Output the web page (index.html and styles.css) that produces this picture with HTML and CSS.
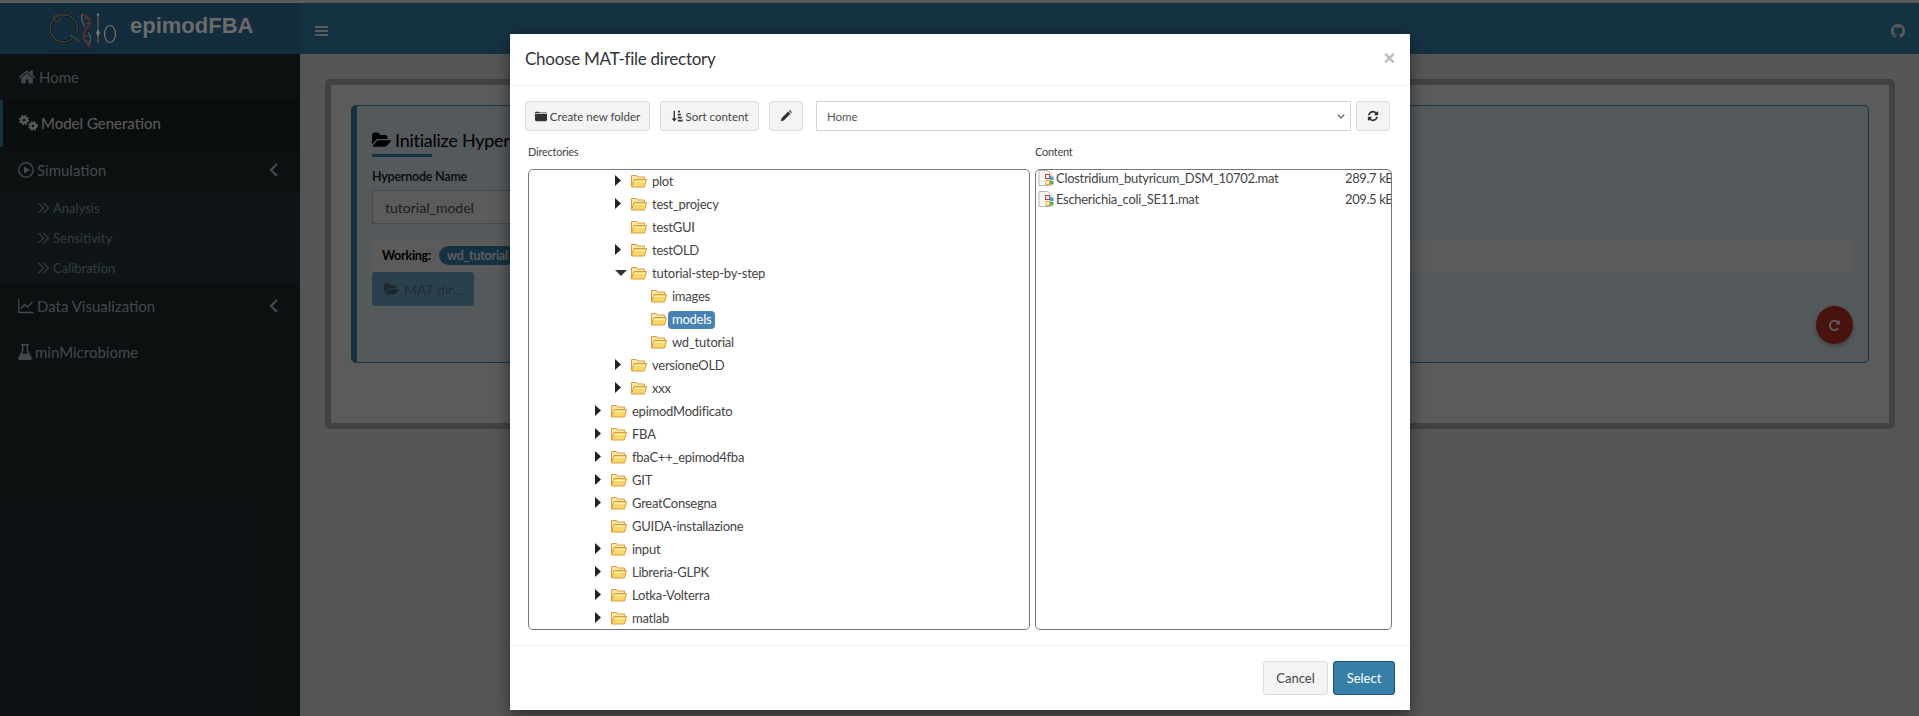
FILE: index.html
```html
<!DOCTYPE html>
<html lang="en">

<head>
    <meta charset="UTF-8">
    <meta name="viewport" content="width=device-width, initial-scale=1.0">
    <title>epimodFBA</title>
    <link rel="stylesheet" href="styles.css">
</head>

<body>
    <svg class="defs" aria-hidden="true">
        <symbol id="i-home" viewBox="0 0 1792 1792"><path d="M1472 992v480q0 26-19 45t-45 19h-384v-384h-256v384h-384q-26 0-45-19t-19-45v-480q0-1 .5-3t.5-3l575-474 575 474q1 2 1 6zm223-69l-62 74q-8 9-21 11h-3q-13 0-21-7l-692-577-692 577q-12 8-24 7-13-2-21-11l-62-74q-8-10-7-23.500t11-21.500l719-599q32-26 76-26t76 26l244 204v-195q0-14 9-23t23-9h192q14 0 23 9t9 23v408l219 182q10 8 11 21.500t-7 23.500z"/></symbol>
        <symbol id="i-open" viewBox="0 0 1920 1792"><path d="M1845 971q0 35-35 75l-336 396q-43 51-120.500 86.500t-143.500 35.500h-1088q-34 0-60.500-13t-26.500-43q0-35 35-75l336-396q43-51 120.500-86.500t143.500-35.500h1088q34 0 60.500 13t26.500 43zm-343-345v160h-832q-94 0-197 47.500t-164 119.500l-337 396-5 6q0-4-.5-12.500t-.5-12.500v-960q0-92 66-158t158-66h320q92 0 158 66t66 158v32h544q92 0 158 66t66 158z"/></symbol>
        <symbol id="i-folder" viewBox="0 0 14 12"><path d="M0 3.500h14v7q0 1.500-1.500 1.500h-11Q0 12 0 10.500zM0 2.500V2q0-1 1-1h3.500l1 1h7.500q1 0 1 .5z"/></symbol>
        <symbol id="i-refresh" viewBox="0 0 1792 1792"><path d="M1639 1056q0 5-1 7-64 268-268 434.500t-478 166.500q-146 0-282.500-55t-243.500-157l-129 129q-19 19-45 19t-45-19-19-45v-448q0-26 19-45t45-19h448q26 0 45 19t19 45-19 45l-137 137q71 66 161 102t187 36q134 0 250-65t186-179q11-17 53-117 8-23 30-23h192q13 0 22.500 9.500t9.500 22.500zm25-800v448q0 26-19 45t-45 19h-448q-26 0-45-19t-19-45 19-45l138-138q-148-137-349-137-134 0-250 65t-186 179q-11 17-53 117-8 23-30 23h-199q-13 0-22.500-9.500t-9.500-22.500v-7q65-268 270-434.500t480-166.500q146 0 284 55.500t245 156.500l130-129q19-19 45-19t45 19 19 45z"/></symbol>
        <symbol id="i-repeat" viewBox="0 0 1792 1792"><path d="M1664 256v448q0 26-19 45t-45 19h-448q-42 0-59-40-17-39 14-69l138-138q-148-137-349-137-104 0-198.500 40.500t-163.500 109.500-109.500 163.500-40.500 198.500 40.500 198.500 109.500 163.500 163.500 109.500 198.500 40.500q119 0 225-52t179-147q7-10 23-12 15 0 25 9l137 138q9 8 9.500 20.500t-7.500 22.500q-109 132-264 204.500t-327 72.500q-156 0-298-61t-245-164-164-245-61-298 61-298 164-245 245-164 298-61q147 0 284.500 55.500t244.500 156.500l130-129q29-31 70-14 39 17 39 59z"/></symbol>
        <symbol id="i-github" viewBox="0 0 16 16"><path d="M8 0C3.58 0 0 3.58 0 8c0 3.54 2.29 6.53 5.47 7.63.4.07.55-.17.55-.38 0-.19-.01-.82-.01-1.49-2.01.37-2.53-.49-2.69-.94-.09-.23-.48-.94-.82-1.13-.28-.15-.68-.52-.01-.53.63-.01 1.08.58 1.23.82.72 1.21 1.87.87 2.33.66.07-.52.28-.87.51-1.07-1.78-.2-3.64-.89-3.64-3.95 0-.87.31-1.59.82-2.15-.08-.2-.36-1.02.08-2.12 0 0 .67-.21 2.2.82.64-.18 1.32-.27 2-.27.68 0 1.36.09 2 .27 1.53-1.04 2.2-.82 2.2-.82.44 1.1.16 1.92.08 2.12.51.56.82 1.27.82 2.15 0 3.07-1.87 3.75-3.65 3.95.29.25.54.73.54 1.48 0 1.07-.01 1.93-.01 2.2 0 .21.15.46.55.38A8.013 8.013 0 0016 8c0-4.42-3.58-8-8-8z"/></symbol>
        <symbol id="i-left" viewBox="0 0 12 16"><path d="M9 2L3 8l6 6" fill="none" stroke="currentColor" stroke-width="2.400"/></symbol>
        <symbol id="i-double" viewBox="0 0 12 12"><path d="M.5 1l5 5-5 5M5.500 1l5 5-5 5" fill="none" stroke="currentColor" stroke-width="1.300"/></symbol>
        <symbol id="i-caret" viewBox="0 0 6 11" preserveAspectRatio="none"><path d="M0 0l6 5.500L0 11z"/></symbol>
        <symbol id="i-caret-down" viewBox="0 0 12 6" preserveAspectRatio="none"><path d="M0 0h12L6 6z"/></symbol>
        <symbol id="i-tree" viewBox="0 0 16 14">
            <path d="M.5 13V1.500h5l1 1.500h7v2.500" fill="#fbe9a8" stroke="#dc9a3c"/>
            <path d="M3 5.500h12.500L13.500 13H.5z" fill="#fdd868" stroke="#dc9a3c"/>
            <path d="M3 7.500h11" stroke="#fff3c4"/>
        </symbol>
        <symbol id="i-mat" viewBox="0 0 16 16">
            <path d="M1 .5h9l3 3v12H1z" fill="#f6f6f6" stroke="#b8b8b8"/>
            <rect x="7.500" y="4.500" width="4" height="4" fill="#fff" stroke="#c9402a"/>
            <rect x="8" y="10.500" width="3.500" height="4" fill="#fff" stroke="#f0a818"/>
            <rect x="12" y="6.500" width="3.500" height="3.500" fill="#3c9ee0"/>
            <rect x="12" y="11" width="3.500" height="3.500" fill="#6aaa48"/>
        </symbol>
    </svg>

    <div class="top-strip"></div>

    <header class="header">
        <div class="logo">
            <svg class="logo-mark" viewBox="0 0 70 40" fill="none">
                <path d="M24 27A13.500 13.500 0 1 1 28 22" stroke="#0e1a20" stroke-width="3"/>
                <path d="M24 27A13.500 13.500 0 1 1 28 22" stroke="#3a4034" stroke-width="1.500"/>
                <circle cx="9" cy="6" r="3.500" stroke="#3a4034" stroke-width="1"/>
                <path d="M22 23l9 6" stroke="#3a4034" stroke-width="2"/>
                <path d="M33 2c9 2 11 9 6 14s-5 12 4 19" stroke="#742626" stroke-width="1.600"/>
                <path d="M34 2c-1 6 1 10 3 13M40 20c3 4 4 8 0 13" stroke="#6c665f" stroke-width="1"/>
                <path d="M36 6h6M36 11h6M36 24h6M37 29h6" stroke="#5a4a48" stroke-width=".7"/>
                <path d="M50 3v28" stroke="#6c665f" stroke-width="1"/>
                <circle cx="50" cy="2.500" r="1.200" fill="#7a746c"/>
                <path d="M50 17l-2 4 2 4 2-4z" fill="#7a746c"/>
                <ellipse cx="62" cy="22" rx="5.500" ry="8.500" stroke="#7a746c" stroke-width="1.200"/>
                <text class="logo-tiny" x="1" y="39">QUANTITATIVE BIOLOGY LAB</text>
            </svg>
            <span class="logo-text">epimodFBA</span>
        </div>
        <nav class="navbar">
            <div class="burger"><span></span><span></span><span></span></div>
            <svg class="github"><use href="#i-github"/></svg>
        </nav>
    </header>

    <div class="wrapper">
        <aside class="sidebar">
            <a class="side-item"><svg class="side-icon icon-home"><use href="#i-home"/></svg>Home</a>
            <a class="side-item side-active">
                <svg class="side-icon icon-cogs" viewBox="0 0 20 16" stroke="currentColor">
                    <circle cx="6" cy="5" r="2.600" stroke-width="2.200"/>
                    <circle cx="6" cy="5" r="4.400" stroke-width="1.500" stroke-dasharray="2 1.450"/>
                    <circle cx="15" cy="11" r="2.400" stroke-width="2.200"/>
                    <circle cx="15" cy="11" r="4" stroke-width="1.500" stroke-dasharray="2 1.200"/>
                </svg>
                Model Generation
            </a>
            <a class="side-item">
                <svg class="side-icon icon-play" viewBox="0 0 16 16">
                    <circle cx="8" cy="8" r="7.200" fill="none" stroke="currentColor" stroke-width="1.400"/>
                    <path d="M6 4.500L12 8l-6 3.500z"/>
                </svg>
                Simulation
                <svg class="side-arrow"><use href="#i-left"/></svg>
            </a>
            <div class="side-sub">
                <a><svg class="sub-icon"><use href="#i-double"/></svg>Analysis</a>
                <a><svg class="sub-icon"><use href="#i-double"/></svg>Sensitivity</a>
                <a><svg class="sub-icon"><use href="#i-double"/></svg>Calibration</a>
            </div>
            <a class="side-item">
                <svg class="side-icon icon-line" viewBox="0 0 16 16">
                    <path d="M.7 1v13.500h15M2.500 11l4-4.500 3 2.500 5-5"/>
                </svg>
                Data Visualization
                <svg class="side-arrow"><use href="#i-left"/></svg>
            </a>
            <a class="side-item">
                <svg class="side-icon icon-flask" viewBox="0 0 14 16">
                    <path d="M3 0h8v1.500h-1v4.500l3.700 7.500q.6 2-1.200 2.500h-11q-1.800-.5-1.200-2.500L4 6V1.500H3zM5.500 1.500v5L4 9.500h6L8.500 6.500v-5z" fill-rule="evenodd"/>
                </svg>
                minMicrobiome
            </a>
        </aside>

        <main class="content">
            <section class="box">
                <div class="card">
                    <h2 class="card-title"><svg class="title-icon"><use href="#i-open"/></svg>Initialize Hypernode</h2>
                    <div class="title-rule"></div>
                    <label class="field-label">Hypernode Name</label>
                    <input class="field-input" type="text" value="tutorial_model">
                    <div class="working"><b>Working:</b><span class="pill">wd_tutorial</span></div>
                    <button class="mat-btn"><svg class="mat-icon"><use href="#i-open"/></svg>MAT dir…</button>
                    <div class="fab-row">
                        <button class="fab"><svg class="fab-icon"><use href="#i-repeat"/></svg></button>
                    </div>
                </div>
            </section>
        </main>
    </div>

    <div class="backdrop"></div>

    <div class="modal">
        <div class="modal-header">
            <h4>Choose MAT-file directory</h4>
            <span class="close">×</span>
        </div>
        <div class="modal-body">
            <div class="toolbar">
                <button class="btn btn-new"><svg class="btn-icon"><use href="#i-folder"/></svg>Create new folder</button>
                <button class="btn btn-sort">
                    <svg class="btn-icon" viewBox="0 0 14 14">
                        <path d="M3 1h1.600v9H7L3.800 13.500.6 10H3zM8 1h2.500v2H8zM8 4.500h3.500v2H8zM8 8h4.500v2H8zM8 11.500h5.500v2H8z"/>
                    </svg>
                    Sort content
                </button>
                <button class="btn btn-edit">
                    <svg class="btn-icon" viewBox="0 0 14 14"><path d="M1 13l.8-3.500L9.500 1.800l2.700 2.700-7.700 7.700zM10.300 1l.7-.5q.5-.3 1 .1l1.400 1.400q.4.5.1 1l-.5.7z"/></svg>
                </button>
                <div class="select-wrap">
                    <select class="dir-select"><option>Home</option></select>
                    <svg class="select-arrow" viewBox="0 0 8 5"><path d="M.7.7L4 4l3.300-3.300"/></svg>
                </div>
                <button class="btn btn-refresh"><svg class="btn-icon"><use href="#i-refresh"/></svg></button>
            </div>
            <div class="panes">
                <div class="pane pane-dirs">
                    <div class="pane-label">Directories</div>
                    <ul class="tree" id="tree"></ul>
                </div>
                <div class="pane pane-files">
                    <div class="pane-label">Content</div>
                    <ul class="files">
                        <li><svg class="mat"><use href="#i-mat"/></svg><span>Clostridium_butyricum_DSM_10702.mat</span><em>289.7 kB</em></li>
                        <li><svg class="mat"><use href="#i-mat"/></svg><span>Escherichia_coli_SE11.mat</span><em>209.5 kB</em></li>
                    </ul>
                </div>
            </div>
        </div>
        <div class="modal-footer">
            <button class="btn btn-cancel">Cancel</button>
            <button class="btn btn-select">Select</button>
        </div>
    </div>

    <script src="tree.js"></script>
</body>

</html>
```

FILE: tree.js
```js
// depth, name, state: c = closed, o = open, n = no children, s = selected
var rows = [
    [2, "plot", "c"],
    [2, "test_projecy", "c"],
    [2, "testGUI", "n"],
    [2, "testOLD", "c"],
    [2, "tutorial-step-by-step", "o"],
    [3, "images", "n"],
    [3, "models", "s"],
    [3, "wd_tutorial", "n"],
    [2, "versioneOLD", "c"],
    [2, "xxx", "c"],
    [1, "epimodModificato", "c"],
    [1, "FBA", "c"],
    [1, "fbaC++_epimod4fba", "c"],
    [1, "GIT", "c"],
    [1, "GreatConsegna", "c"],
    [1, "GUIDA-installazione", "n"],
    [1, "input", "c"],
    [1, "Libreria-GLPK", "c"],
    [1, "Lotka-Volterra", "c"],
    [1, "matlab", "c"]
];

var tree = document.getElementById("tree");

rows.forEach(function (r) {
    var li = document.createElement("li");
    li.className = "depth" + r[0];

    var arrow = "";
    if (r[2] == "c") arrow = '<svg class="caret"><use href="#i-caret"/></svg>';
    if (r[2] == "o") arrow = '<svg class="caret-down"><use href="#i-caret-down"/></svg>';

    li.innerHTML = '<span class="toggle">' + arrow + '</span>' +
        '<svg class="folder"><use href="#i-tree"/></svg>' +
        '<span class="name' + (r[2] == "s" ? " selected" : "") + '">' + r[1] + '</span>';
    tree.appendChild(li);
});
```

FILE: styles.css
```css
* {
    box-sizing: border-box;
}

body {
    margin: 0;
    height: 716px;
    overflow: hidden;
    font-family: Lato, "Noto Sans", sans-serif;
    font-size: 13px;
    letter-spacing: -.25px;
    color: #333;
    background-color: #ecf0f5;
}

.defs {
    display: none;
}

.top-strip {
    height: 3px;
    background-color: #fff;
}

/* header */
.header {
    display: flex;
    height: 51px;
}

.logo {
    width: 300px;
    display: flex;
    align-items: center;
    padding-left: 48px;
    background-color: #367fa9;
}

/* the logo image stays lighter than the backdrop would leave it */
.logo-mark {
    position: relative;
    z-index: 2;
    width: 70px;
    height: 40px;
    margin: 6px 12px 0 0;
}

.logo-tiny {
    font-family: "Liberation Sans", sans-serif;
    font-size: 2.400px;
    font-weight: bold;
    letter-spacing: .42px;
    fill: #0c0c0c;
}

.logo-text {
    position: relative;
    z-index: 2;
    font-family: "Liberation Sans", sans-serif;
    font-size: 22px;
    font-weight: bold;
    letter-spacing: 0;
    margin-bottom: 5px;
    color: #6b6b6b;
}

.navbar {
    flex: 1;
    display: flex;
    align-items: center;
    justify-content: space-between;
    padding: 4px 14px 0 15px;
    background-color: #3c8dbc;
}

.burger span {
    display: block;
    width: 13px;
    height: 2px;
    margin: 2px 0;
    background-color: #fff;
}

.github {
    width: 14px;
    height: 14px;
    fill: #fff;
}

/* sidebar */
.wrapper {
    display: flex;
    height: 662px;
}

.sidebar {
    width: 300px;
    background-color: #222d32;
    color: #b8c7ce;
}

.side-item {
    display: flex;
    align-items: center;
    height: 46.300px;
    padding: 0 0 0 18px;
    font-size: 15px;
    letter-spacing: 0;
}

.side-active {
    border-left: 3px solid #3c8dbc;
    padding-left: 15px;
    background-color: #1e282c;
    color: #fff;
}

.side-icon {
    flex: none;
    fill: currentColor;
    margin-right: 3px;
}

.icon-home {
    width: 18px;
    height: 18px;
}

.icon-cogs {
    width: 20px;
    height: 16px;
    fill: none;
}

.icon-play {
    width: 16px;
    height: 16px;
}

.icon-line {
    width: 16px;
    height: 16px;
    fill: none;
    stroke: currentColor;
    stroke-width: 1.300;
}

.icon-flask {
    width: 14px;
    height: 16px;
}

.side-arrow {
    width: 12px;
    height: 16px;
    margin-left: auto;
    margin-right: 20px;
}

.side-sub {
    height: 90px;
    padding-left: 38px;
    background-color: #2c3b41;
    color: #8aa4af;
    font-size: 13px;
    letter-spacing: 0;
}

.side-sub a {
    display: flex;
    align-items: center;
    height: 30px;
}

.sub-icon {
    width: 12px;
    height: 12px;
    margin-right: 3px;
}

/* page content */
.content {
    flex: 1;
    padding: 25px 24px 0 25px;
}

.box {
    height: 350px;
    padding: 20px 20px 0 20px;
    border: 6px solid #b8b8b8;
    border-radius: 5px;
    background-color: #fff;
}

.card {
    height: 258px;
    padding: 15px 15px 0;
    border: 1px solid #3c8dbc;
    border-left-width: 6px;
    border-radius: 5px;
    background-color: #ebf8ff;
}

.card-title {
    display: flex;
    align-items: center;
    margin: 8px 0 0;
    font-size: 18px;
    font-weight: normal;
    color: #000;
}

.title-icon {
    width: 20px;
    height: 18px;
    margin-right: 3px;
}

.title-rule {
    width: 60px;
    height: 3px;
    margin-top: 3px;
    background-color: #3c8dbc;
}

.field-label {
    display: block;
    margin-top: 12px;
    font-size: 12.500px;
    font-weight: bold;
}

.field-input {
    display: block;
    width: 400px;
    height: 34px;
    margin-top: 6px;
    padding: 0 12px;
    border: 1px solid #ccc;
    font: inherit;
    font-size: 14px;
    color: #555;
}

.working {
    display: flex;
    align-items: center;
    height: 33px;
    margin-top: 15px;
    padding-left: 10px;
    background-color: #fff;
    color: #000;
    font-size: 12.500px;
}

.pill {
    margin-left: 8px;
    padding: 2px 8px;
    border-radius: 10px;
    background-color: #3c8dbc;
    color: #fff;
    font-weight: bold;
}

.mat-btn {
    display: flex;
    align-items: center;
    width: 102px;
    height: 34px;
    padding: 0 12px;
    border: none;
    border-radius: 3px;
    background-color: #78b4d8;
    color: #5f8299;
    font: inherit;
    font-size: 14px;
    white-space: nowrap;
}

.mat-icon {
    flex: none;
    width: 16px;
    height: 14px;
    margin-right: 4px;
    fill: #4f6a7a;
}

.fab-row {
    display: flex;
    justify-content: flex-end;
}

.fab {
    display: flex;
    align-items: center;
    justify-content: center;
    width: 37px;
    height: 38px;
    border: none;
    border-radius: 50%;
    background-color: #c9352a;
    box-shadow: 0 2px 5px rgba(0, 0, 0, .3);
}

.fab-icon {
    width: 13px;
    height: 13px;
    fill: #fff;
}

/* modal */
.backdrop {
    position: absolute;
    z-index: 1;
    top: 0;
    left: 0;
    width: 100%;
    height: 100%;
    background-color: rgba(0, 0, 0, .645);
}

.modal {
    position: absolute;
    z-index: 3;
    top: 34px;
    left: 510px;
    display: flex;
    flex-direction: column;
    width: 900px;
    height: 676px;
    background-color: #fff;
    box-shadow: 0 5px 15px rgba(0, 0, 0, .5);
}

.modal-header {
    display: flex;
    align-items: center;
    justify-content: space-between;
    height: 52px;
    padding: 0 15px 2px;
    border-bottom: 1px solid #f4f4f4;
}

.modal-header h4 {
    margin: 0;
    font-size: 17px;
    font-weight: normal;
}

.close {
    font-family: "Liberation Sans", sans-serif;
    font-size: 20px;
    font-weight: bold;
    color: #bbb;
}

.modal-body {
    height: 560px;
    padding: 15px 15px 0;
    border-bottom: 1px solid #f4f4f4;
}

.toolbar {
    display: flex;
    height: 30px;
}

.btn {
    display: flex;
    align-items: center;
    justify-content: center;
    height: 30px;
    padding: 0;
    border: 1px solid #ddd;
    border-radius: 3px;
    background-color: #f4f4f4;
    color: #444;
    font: inherit;
    font-size: 11.500px;
    white-space: nowrap;
}

.btn-icon {
    width: 12px;
    height: 12px;
    margin-right: 3px;
    fill: #333;
}

.btn-new {
    width: 125px;
}

.btn-sort {
    width: 99px;
    margin-left: 10px;
}

.btn-edit {
    width: 34px;
    margin-left: 10px;
}

.btn-edit .btn-icon,
.btn-refresh .btn-icon {
    margin: 0;
}

.select-wrap {
    position: relative;
    width: 535px;
    height: 30px;
    margin-left: 13px;
}

.dir-select {
    width: 100%;
    height: 30px;
    padding: 0 10px;
    border: 1px solid #d2d6de;
    background-color: #fff;
    color: #555;
    font: inherit;
    font-size: 11.500px;
    appearance: none;
}

.select-arrow {
    position: absolute;
    top: 13px;
    right: 6px;
    width: 8px;
    height: 5px;
    fill: none;
    stroke: #555;
    stroke-width: 1.200;
}

.btn-refresh {
    width: 34px;
    margin-left: 5px;
}

.panes {
    display: flex;
    padding: 0 0 0 3px;
}

.pane-label {
    height: 38px;
    padding-top: 14px;
    font-size: 11px;
    color: #444;
}

.pane-dirs {
    width: 502px;
}

.pane-files {
    width: 357px;
    margin-left: 5px;
}

.tree,
.files {
    height: 461px;
    margin: 0;
    padding: 0;
    list-style: none;
    overflow: hidden;
    border: 1px solid #777;
    border-radius: 5px;
    color: #444;
}

.tree li {
    display: flex;
    align-items: center;
    height: 23px;
}

.depth1 {
    padding-left: 66px;
}

.depth2 {
    padding-left: 86px;
}

.depth3 {
    padding-left: 106px;
}

.toggle {
    display: flex;
    align-items: center;
    width: 16px;
    margin-bottom: 2px;
}

.caret {
    width: 6px;
    height: 11px;
    fill: #222;
}

.caret-down {
    width: 12px;
    height: 6px;
    fill: #333;
}

.folder {
    width: 16px;
    height: 14px;
    margin: 0 1px 2px 0;
}

.name {
    padding: 0 4px;
    height: 18px;
    line-height: 17px;
    border-radius: 4px;
}

.selected {
    background-color: #4682b4;
    color: #fff;
}

.files {
    letter-spacing: -.3px;
}

.files li {
    display: flex;
    align-items: center;
    height: 16px;
    margin-bottom: 5px;
    padding-left: 2px;
}

.mat {
    width: 16px;
    height: 16px;
    margin-right: 2px;
}

.files span {
    flex: 1;
}

.files em {
    width: 46px;
    font-style: normal;
    letter-spacing: -.4px;
    white-space: nowrap;
}

.modal-footer {
    display: flex;
    justify-content: flex-end;
    gap: 5px;
    height: 64px;
    padding: 15px 15px 0 0;
}

.modal-footer .btn {
    height: 34px;
    font-size: 13px;
}

.btn-cancel {
    width: 65px;
}

.modal-footer .btn-select {
    width: 62px;
    border-color: #204d74;
    background-color: #367fa9;
    color: #fff;
}
```
